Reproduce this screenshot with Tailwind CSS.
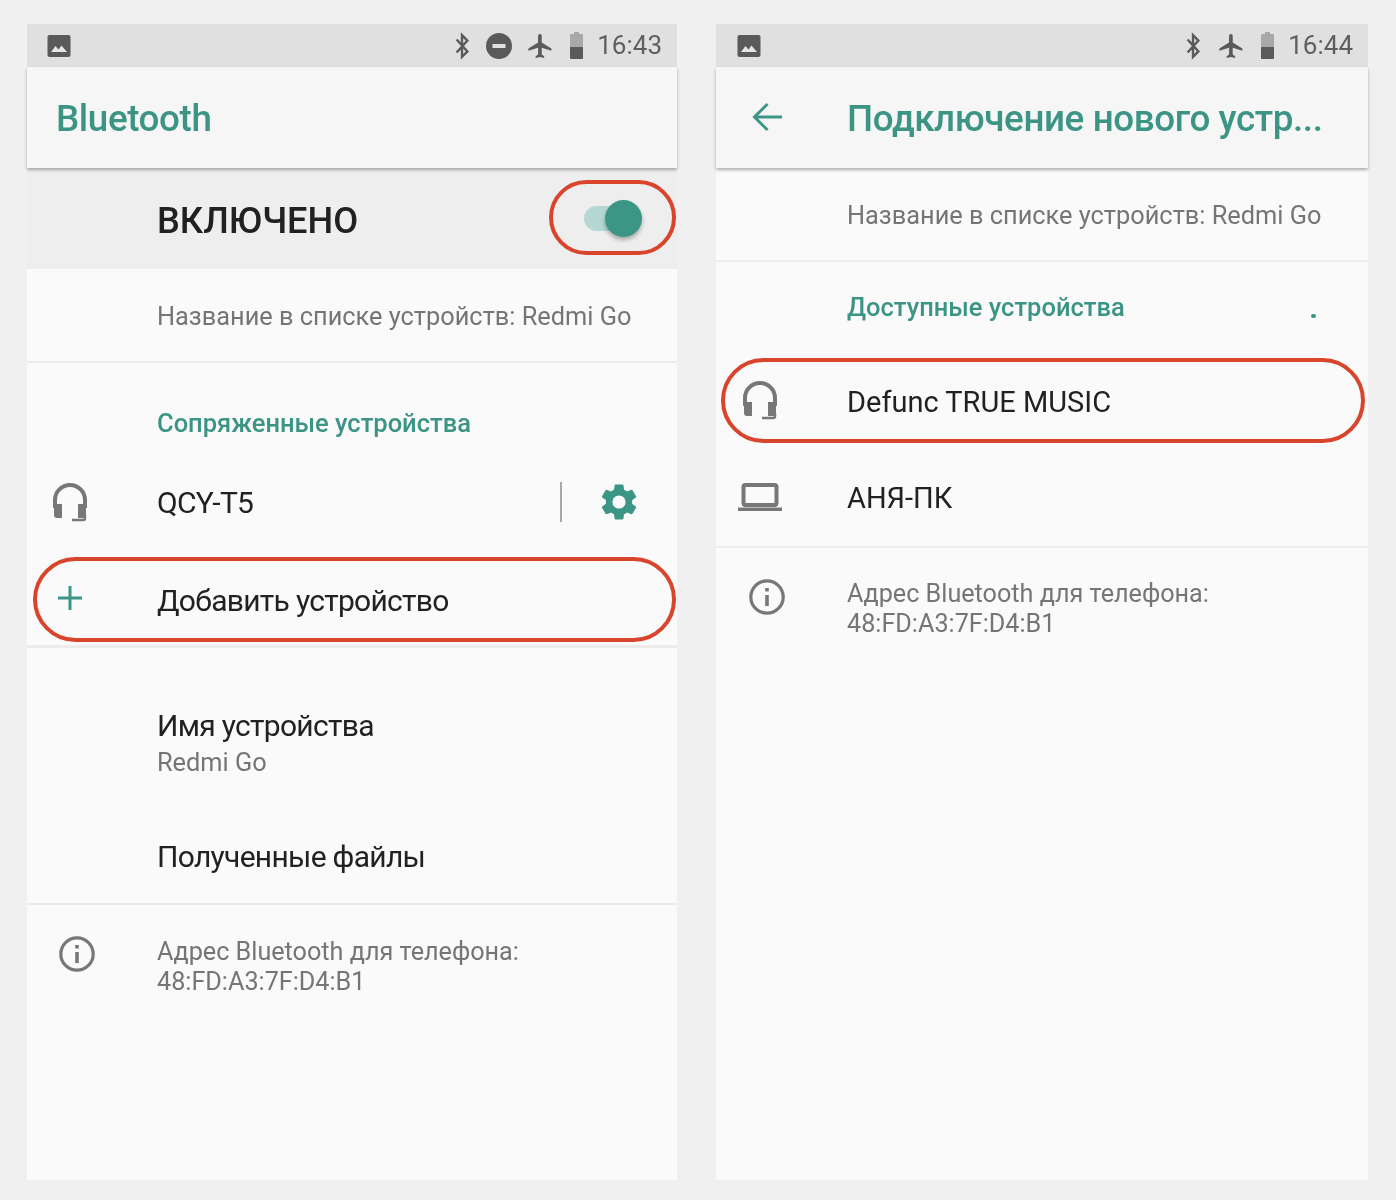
<!DOCTYPE html>
<html><head><meta charset="utf-8"><script src="https://cdn.jsdelivr.net/npm/@tailwindcss/browser@4"></script></head>
<body class="m-0">
<div class="relative flex h-[1200px] w-[1396px] gap-[39px] overflow-hidden bg-[#f0f0f0] pl-[27px] pt-[24px] font-['Roboto',sans-serif] blur-[0.4px]">

<!-- LEFT -->
<div class="relative flex h-[1156px] w-[650px] flex-col bg-[#fafafa]">
  <div class="flex h-[43px] items-center bg-[#e0e0e0] pl-[20px] pr-[15px]">
    <svg class="h-[24px] w-[24px]" viewBox="0 0 24 24"><rect x="0.5" y="1" width="23" height="22" rx="2" fill="#5a5a5a"/><path d="M4 18l4.5-6 3 3.6 3-4.1L20 18z" fill="#e6e6e6"/></svg>
    <div class="ml-auto flex items-center">
      <svg class="h-[28px] w-[18px]" viewBox="0 0 16 26"><path d="M3 7l10 11-5 5V3l5 5L3 19" fill="none" stroke="#5a5a5a" stroke-width="2.2"/></svg>
      <svg class="ml-[15px] h-[26px] w-[26px]" viewBox="0 0 26 26"><circle cx="13" cy="13" r="13" fill="#5a5a5a"/><rect x="6.5" y="11" width="13" height="4" fill="#e0e0e0"/></svg>
      <svg class="ml-[14px] h-[30px] w-[29px]" viewBox="0 0 24 24"><path d="M21 16v-2l-8-5V3.5a1.5 1.5 0 0 0-3 0V9l-8 5v2l8-2.5V19l-2 1.5V22l3.5-1 3.5 1v-1.5L13 19v-5.500z" fill="#5a5a5a"/></svg>
      <svg class="ml-[14px] h-[27px] w-[15px]" viewBox="0 0 15 27"><path d="M5 0h5v2h3a1 1 0 0 1 1 1v23a1 1 0 0 1-1 1H2a1 1 0 0 1-1-1V3a1 1 0 0 1 1-1h3z" fill="#a8a8a8"/><path d="M1 15h13v11a1 1 0 0 1-1 1H2a1 1 0 0 1-1-1z" fill="#5a5a5a"/></svg>
      <span class="ml-[13px] mt-[-1px] text-[26px] leading-none text-[#5f5f5f]">16:43</span>
    </div>
  </div>
  <div class="relative z-10 flex h-[101px] items-center bg-[#f6f6f6] pt-[4px] pl-[29px] shadow-[0_2px_3px_rgba(0,0,0,0.3)]">
    <span class="text-[36.8px] font-medium leading-none tracking-[-0.4px] text-[#3b9484]">Bluetooth</span>
  </div>
  <div class="flex h-[101px] items-center bg-[#eeeeee] pl-[130px] pr-[35px]">
    <span class="mt-[5px] text-[36.2px] font-medium leading-none text-[#212121]">ВКЛЮЧЕНО</span>
    <div class="relative ml-auto h-[25px] w-[58px] rounded-full bg-[#b5d8d3]">
      <div class="absolute right-0 top-[-6px] h-[37px] w-[37px] rounded-full bg-[#3c9686] shadow-[0_3px_4px_rgba(0,0,0,0.3)]"></div>
    </div>
  </div>
  <div class="flex h-[94px] items-center border-b-2 border-[#ececec] pt-[3px] pl-[130px]">
    <span class="text-[25.35px] leading-none text-[#757575]">Название в списке устройств: Redmi Go</span>
  </div>
  <div class="flex h-[98px] items-end pb-[23px] pl-[130px]">
    <span class="text-[25.500px] font-medium leading-[30px] text-[#3b9484]">Сопряженные устройства</span>
  </div>
  <div class="flex h-[82px] items-center pl-[25px] pr-[38px]">
    <svg class="h-[40px] w-[36px]" viewBox="0 0 36 40"><path d="M3 26V18a15 15 0 0 1 30 0v8" fill="none" stroke="#777" stroke-width="4"/><path d="M2 22h8v14H5a3 3 0 0 1-3-3zM26 22h8v11a3 3 0 0 1-3 3h-5z" fill="#777"/><path d="M33 33v3a2 2 0 0 1-2 2H20" fill="none" stroke="#777" stroke-width="2.500"/></svg>
    <span class="ml-[69px] mt-[2px] text-[30px] leading-none tracking-[-0.7px] text-[#212121]">QCY-T5</span>
    <div class="ml-auto mr-[35px] h-[40px] w-[2px] bg-[#a8a8a8]"></div>
    <svg class="h-[44px] w-[44px] mr-[-2px]" viewBox="0 0 24 24"><path fill="#3c9686" d="M19.14 12.94a7.07 7.07 0 0 0 0-1.88l2.030-1.58a.48.48 0 0 0 .12-.61l-1.920-3.32a.48.48 0 0 0-.59-.22l-2.390.96a7 7 0 0 0-1.620-.94l-.36-2.540a.48.48 0 0 0-.48-.41h-3.840a.48.48 0 0 0-.47.41l-.36 2.540a7.4 7.4 0 0 0-1.620.94l-2.390-.96a.48.48 0 0 0-.59.22L2.740 8.870a.47.47 0 0 0 .12.61l2.030 1.580a7.3 7.3 0 0 0 0 1.880l-2.030 1.580a.48.48 0 0 0-.12.61l1.920 3.320c.12.22.37.29.59.22l2.390-.96c.5.38 1.030.7 1.620.94l.36 2.540c.05.24.24.41.48.41h3.840c.24 0 .44-.17.47-.41l.36-2.540a7 7 0 0 0 1.620-.94l2.390.96c.22.08.47 0 .59-.22l1.920-3.320a.47.47 0 0 0-.12-.61zM12 15.600a3.600 3.600 0 1 1 0-7.200 3.600 3.600 0 0 1 0 7.200z"/></svg>
  </div>
  <div class="flex h-[105px] items-center border-b-[3px] border-[#ececec] pt-[8px] pl-[30px]">
    <svg class="h-[26px] w-[26px]" viewBox="0 0 26 26"><path d="M13 1v24M1 13h24" stroke="#3c9686" stroke-width="3"/></svg>
    <span class="ml-[74px] mt-[6px] text-[30px] leading-none tracking-[-0.7px] text-[#212121]">Добавить устройство</span>
  </div>
  <div class="flex h-[129px] flex-col justify-end pl-[130px]">
    <span class="text-[30px] leading-[34px] tracking-[-0.7px] text-[#212121]">Имя устройства</span>
    <span class="mt-[4px] text-[25.35px] leading-[30px] text-[#757575]">Redmi Go</span>
  </div>
  <div class="flex h-[128px] items-center border-b-2 border-[#ececec] pt-[33px] pl-[130px]">
    <span class="text-[30px] leading-none tracking-[-0.7px] text-[#212121]">Полученные файлы</span>
  </div>
  <div class="flex pl-[32px] pt-[30px]">
    <svg class="mt-[1px] h-[36px] w-[36px]" viewBox="0 0 36 36"><circle cx="18" cy="18" r="16.200" fill="none" stroke="#777" stroke-width="3.200"/><path d="M16.200 16h3.600v11h-3.600zM16.200 9h3.600v3.600h-3.600z" fill="#777"/></svg>
    <div class="ml-[62px] mt-[2px] text-[25.2px] leading-[30px] text-[#757575]">Адрес Bluetooth для телефона:<br>48:FD:A3:7F:D4:B1</div>
  </div>
  <!-- red highlights -->
  <div class="absolute left-[522px] top-[156px] h-[75px] w-[127px] rounded-full border-4 border-[#d9452c]"></div>
  <div class="absolute left-[6px] top-[533px] h-[85px] w-[643px] rounded-full border-4 border-[#d9452c]"></div>
</div>

<!-- RIGHT -->
<div class="relative flex h-[1156px] w-[652px] flex-col bg-[#fafafa]">
  <div class="flex h-[43px] items-center bg-[#e0e0e0] pl-[21px] pr-[15px]">
    <svg class="h-[24px] w-[24px]" viewBox="0 0 24 24"><rect x="0.5" y="1" width="23" height="22" rx="2" fill="#5a5a5a"/><path d="M4 18l4.5-6 3 3.6 3-4.1L20 18z" fill="#e6e6e6"/></svg>
    <div class="ml-auto flex items-center">
      <svg class="h-[28px] w-[18px]" viewBox="0 0 16 26"><path d="M3 7l10 11-5 5V3l5 5L3 19" fill="none" stroke="#5a5a5a" stroke-width="2.2"/></svg>
      <svg class="ml-[15px] h-[30px] w-[29px]" viewBox="0 0 24 24"><path d="M21 16v-2l-8-5V3.5a1.5 1.5 0 0 0-3 0V9l-8 5v2l8-2.5V19l-2 1.5V22l3.5-1 3.5 1v-1.5L13 19v-5.500z" fill="#5a5a5a"/></svg>
      <svg class="ml-[14px] h-[27px] w-[15px]" viewBox="0 0 15 27"><path d="M5 0h5v2h3a1 1 0 0 1 1 1v23a1 1 0 0 1-1 1H2a1 1 0 0 1-1-1V3a1 1 0 0 1 1-1h3z" fill="#a8a8a8"/><path d="M1 15h13v11a1 1 0 0 1-1 1H2a1 1 0 0 1-1-1z" fill="#5a5a5a"/></svg>
      <span class="ml-[13px] mt-[-1px] text-[26px] leading-none text-[#5f5f5f]">16:44</span>
    </div>
  </div>
  <div class="relative z-10 flex h-[101px] items-center bg-[#f6f6f6] pt-[4px] pl-[36px] shadow-[0_2px_3px_rgba(0,0,0,0.3)]">
    <svg class="mb-[6px] h-[30px] w-[30px]" viewBox="0 0 30 30"><path d="M30 15H3M15.500 2L2.500 15l13 13" fill="none" stroke="#3c9686" stroke-width="3"/></svg>
    <span class="ml-[65px] text-[36.8px] font-medium leading-none tracking-[-0.4px] text-[#3b9484]">Подключение нового устр...</span>
  </div>
  <div class="flex h-[94px] items-center border-b-2 border-[#ececec] pt-[3px] pl-[131px]">
    <span class="text-[25.35px] leading-none text-[#757575]">Название в списке устройств: Redmi Go</span>
  </div>
  <div class="flex h-[91px] items-center pb-[2px] pl-[131px] pr-[52px]">
    <span class="text-[25.500px] font-medium leading-[30px] text-[#3b9484]">Доступные устройства</span>
    <div class="ml-auto mt-[18px] h-[4px] w-[5px] rounded-full bg-[#3c9686]"></div>
  </div>
  <div class="flex h-[96px] items-center pt-[2px] pb-[5px] pl-[26px]">
    <svg class="h-[42px] w-[36px]" viewBox="0 0 36 40"><path d="M3 26V18a15 15 0 0 1 30 0v8" fill="none" stroke="#777" stroke-width="4"/><path d="M2 22h8v14H5a3 3 0 0 1-3-3zM26 22h8v11a3 3 0 0 1-3 3h-5z" fill="#777"/><path d="M33 33v3a2 2 0 0 1-2 2H20" fill="none" stroke="#777" stroke-width="2.500"/></svg>
    <span class="ml-[69px] mt-[6px] text-[29px] leading-none text-[#212121]">Defunc TRUE MUSIC</span>
  </div>
  <div class="flex h-[99px] items-center border-b-2 border-[#ececec] pt-[4px] pb-[4px] pl-[22px]">
    <svg class="mb-[2px] h-[28px] w-[44px]" viewBox="0 0 44 28"><rect x="5.500" y="2" width="33" height="20" rx="2" fill="none" stroke="#777" stroke-width="4"/><rect x="0" y="24.500" width="44" height="3.500" fill="#777"/></svg>
    <span class="ml-[65px] mt-[2px] text-[29px] leading-none text-[#212121]">АНЯ-ПК</span>
  </div>
  <div class="flex pl-[33px] pt-[30px]">
    <svg class="mt-[1px] h-[36px] w-[36px]" viewBox="0 0 36 36"><circle cx="18" cy="18" r="16.200" fill="none" stroke="#777" stroke-width="3.200"/><path d="M16.200 16h3.600v11h-3.600zM16.200 9h3.600v3.600h-3.600z" fill="#777"/></svg>
    <div class="ml-[62px] mt-[1px] text-[25.2px] leading-[30px] text-[#757575]">Адрес Bluetooth для телефона:<br>48:FD:A3:7F:D4:B1</div>
  </div>
  <div class="absolute left-[5px] top-[334px] h-[85px] w-[644px] rounded-full border-4 border-[#d9452c]"></div>
</div>
</div>
</body></html>
